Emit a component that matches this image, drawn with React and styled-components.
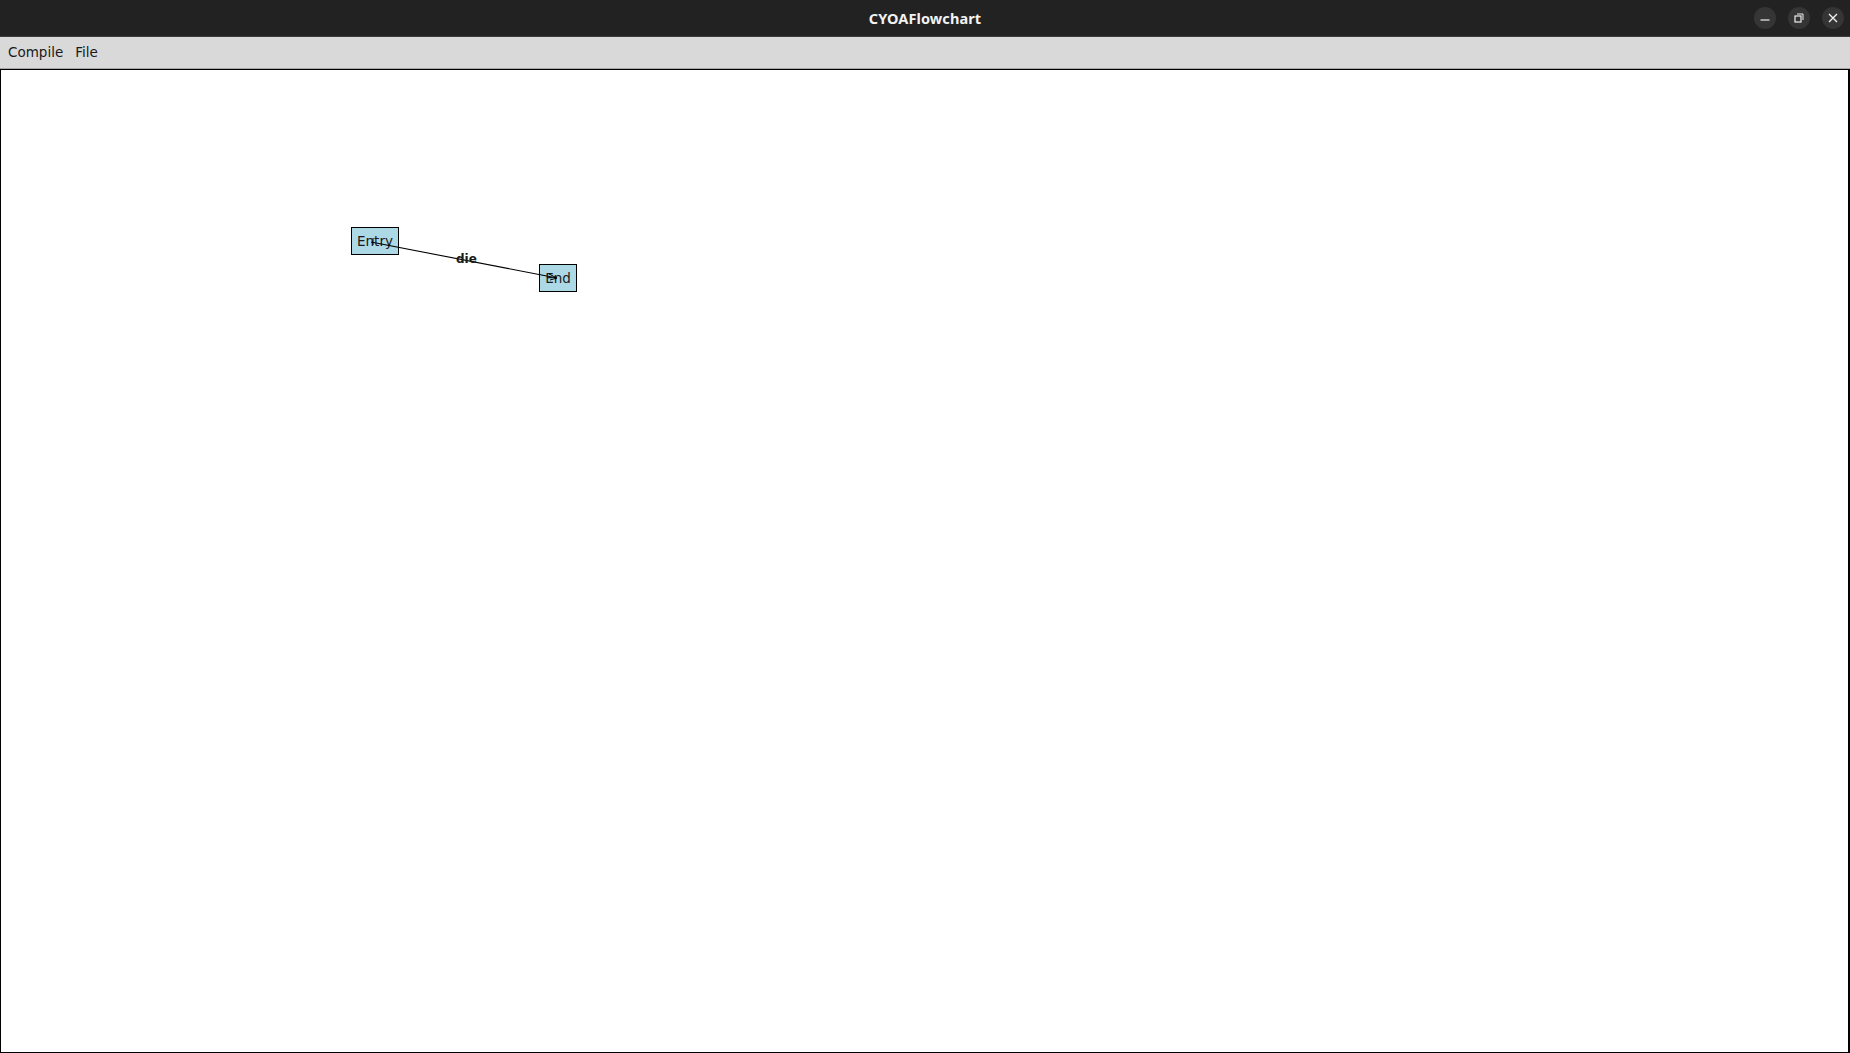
import React from "react";
import styled, { createGlobalStyle } from "styled-components";

const Global = createGlobalStyle`
  html, body { margin: 0; padding: 0; height: 100%; overflow: hidden; }
  body { font-family: "DejaVu Sans", "Liberation Sans", sans-serif; }
  #root { height: 100%; }
`;

const Window = styled.div`
  display: flex;
  flex-direction: column;
  width: 1850px;
  height: 1053px;
  background: #ffffff;
`;

const TitleBar = styled.header`
  position: relative;
  height: 36px;
  flex: 0 0 36px;
  background: #222222;
  display: flex;
  align-items: center;
  justify-content: center;
  border-bottom: 1px solid #3c3c3c;
`;

const Title = styled.span`
  color: #f2f2f2;
  font-family: "Noto Sans", "DejaVu Sans", sans-serif;
  font-weight: 700;
  font-size: 14.5px;
  letter-spacing: 0.1px;
`;

const Controls = styled.div`
  position: absolute;
  right: 6px;
  top: 7px;
  display: flex;
  gap: 12px;
`;

const CtrlButton = styled.div`
  width: 22px;
  height: 22px;
  border-radius: 50%;
  background: #353535;
  display: flex;
  align-items: center;
  justify-content: center;
`;

const MenuBar = styled.nav`
  flex: 0 0 31px;
  height: 31px;
  background: #d9d9d9;
  display: flex;
  align-items: center;
  padding-left: 8px;
  gap: 12px;
  border-bottom: 1px solid #a8a8a8;
`;

const MenuItem = styled.span`
  font-family: "DejaVu Sans", sans-serif;
  font-size: 13.5px;
  color: #1a1a1a;
  margin-top: -1px;
`;

const Canvas = styled.main`
  position: relative;
  flex: 1 1 auto;
  border: 1px solid #000000;
  border-width: 1px 2px 1px 1px;
  background: #ffffff;
  overflow: hidden;
`;

const Node = styled.div`
  position: absolute;
  box-sizing: border-box;
  background: #add8e6;
  border: 1px solid #000000;
  font-family: "DejaVu Sans", sans-serif;
  font-size: 13.5px;
  color: #1a1a1a;
  display: flex;
  align-items: center;
  justify-content: center;
`;

const EdgeLayer = styled.svg`
  position: absolute;
  left: 0;
  top: 0;
  pointer-events: none;
`;

const EdgeLabel = styled.span`
  position: absolute;
  font-family: "DejaVu Sans", sans-serif;
  font-weight: 700;
  font-size: 12px;
  color: #1a1a1a;
`;

const nodes = [
  { id: "entry", label: "Entry", x: 350, y: 157, w: 48, h: 28 },
  { id: "end", label: "End", x: 538, y: 194, w: 38, h: 28 },
];

export default function App() {
  return (
    <>
      <Global />
      <Window>
        <TitleBar>
          <Title>CYOAFlowchart</Title>
          <Controls>
            <CtrlButton>
              <svg width="10" height="10" viewBox="0 0 10 10">
                <line x1="0.5" y1="7" x2="9.5" y2="7" stroke="#eeeeee" strokeWidth="1.2" />
              </svg>
            </CtrlButton>
            <CtrlButton>
              <svg width="10" height="10" viewBox="0 0 10 10">
                <rect x="1" y="3" width="6" height="6" fill="none" stroke="#eeeeee" strokeWidth="1.2" />
                <path d="M3 1 H9 V7" fill="none" stroke="#eeeeee" strokeWidth="1" />
              </svg>
            </CtrlButton>
            <CtrlButton>
              <svg width="10" height="10" viewBox="0 0 10 10">
                <path d="M1 1 L9 9 M9 1 L1 9" stroke="#eeeeee" strokeWidth="1.4" />
              </svg>
            </CtrlButton>
          </Controls>
        </TitleBar>
        <MenuBar>
          <MenuItem>Compile</MenuItem>
          <MenuItem>File</MenuItem>
        </MenuBar>
        <Canvas>
          {nodes.map((n) => (
            <Node
              key={n.id}
              style={{ left: n.x, top: n.y, width: n.w, height: n.h }}
            >
              {n.label}
            </Node>
          ))}
          <EdgeLayer width="800" height="400">
            <line x1="370" y1="172" x2="556" y2="208" stroke="#000" strokeWidth="1.1" />
            <path d="M372 168 L372 175 M556 208 L548 204 M556 208 L549 210" stroke="#000" strokeWidth="1" fill="none" />
          </EdgeLayer>
          <EdgeLabel style={{ left: 455, top: 182 }}>die</EdgeLabel>
        </Canvas>
      </Window>
    </>
  );
}
